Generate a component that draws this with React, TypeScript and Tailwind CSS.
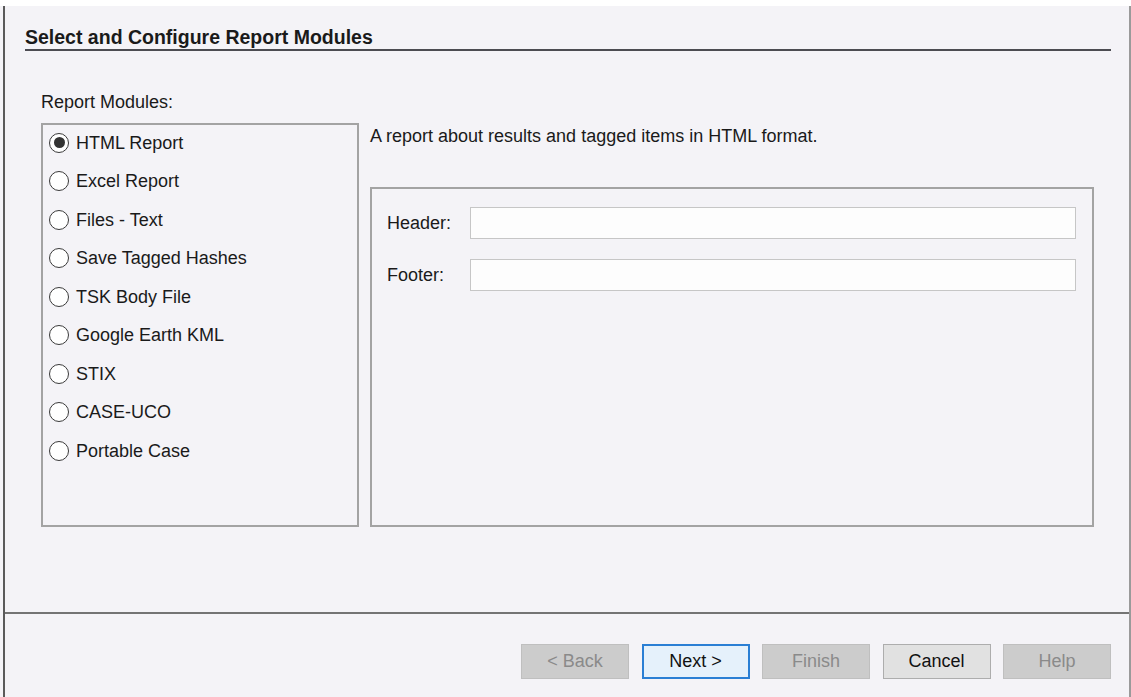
import React from "react";

const modules = [
  "HTML Report",
  "Excel Report",
  "Files - Text",
  "Save Tagged Hashes",
  "TSK Body File",
  "Google Earth KML",
  "STIX",
  "CASE-UCO",
  "Portable Case",
];

function Radio({ checked }: { checked: boolean }) {
  return (
    <span className="flex h-[20px] w-[20px] shrink-0 items-center justify-center rounded-full border-[1.5px] border-[#3a3a3a] bg-white">
      {checked && <span className="block h-[11px] w-[11px] rounded-full bg-[#333333]" />}
    </span>
  );
}

function Btn({ label, kind }: { label: string; kind: "disabled" | "default" | "normal" }) {
  const cls =
    kind === "disabled"
      ? "bg-[#cccccc] border border-[#bfbfbf] text-[#8a8a8a]"
      : kind === "default"
      ? "bg-[#e5f1fb] border-2 border-[#2a7fd4] text-[#111111]"
      : "bg-[#e1e1e1] border border-[#adadad] text-[#111111]";
  return (
    <div className={`flex h-[35px] w-[108px] items-center justify-center text-[18px] ${cls}`}>
      {label}
    </div>
  );
}

export default function App() {
  return (
    <div
      className="flex h-[697px] w-[1131px] flex-col overflow-hidden bg-[#f4f3f7] text-[#1a1a1a]"
      style={{ fontFamily: '"Liberation Sans", Arial, sans-serif' }}
    >
      <div className="h-[6px] shrink-0 bg-white" />
      <div className="ml-[3px] flex flex-1 flex-col border-l-2 border-r-2 border-l-[#5a5a5a] border-r-[#9a9a9a]">
        {/* upper content */}
        <div className="flex h-[606px] shrink-0 flex-col">
          <div className="ml-[20px] mr-[18px] mt-[19px]">
            <div className="h-[24px] text-[19.5px] font-bold leading-[24px] text-[#1a1a1a]">
              Select and Configure Report Modules
            </div>
            <div className="h-[2px] bg-[#4c4c52]" />
          </div>
          <div className="ml-[36px] mr-[35px] mt-[40px] flex flex-col">
            <div className="h-[22px] text-[18px] leading-[22px]">Report Modules:</div>
            <div className="mt-[10px] flex h-[404px] gap-[11px]">
              <div className="w-[318px] shrink-0 border-2 border-[#a3a3a3]">
                <div className="-mt-[1.5px] flex flex-col">
                  {modules.map((m, i) => (
                    <div key={m} className="flex h-[38.5px] items-center gap-[7px] pl-[6px]">
                      <Radio checked={i === 0} />
                      <span className="text-[18px] leading-[22px]">{m}</span>
                    </div>
                  ))}
                </div>
              </div>
              <div className="flex flex-1 flex-col">
                <div className="mt-[1.5px] h-[22px] text-[18px] leading-[22px]">
                  A report about results and tagged items in HTML format.
                </div>
                <div className="mt-[40.5px] flex-1 border-2 border-[#a3a3a3] pl-[15px] pr-[16px] pt-[18px]">
                  <div className="flex h-[32px] items-center">
                    <span className="w-[83px] shrink-0 text-[18px]">Header:</span>
                    <div className="h-[32px] flex-1 border border-[#c6c6c6] bg-[#fdfdfd]" />
                  </div>
                  <div className="mt-[20px] flex h-[32px] items-center">
                    <span className="w-[83px] shrink-0 text-[18px]">Footer:</span>
                    <div className="h-[32px] flex-1 border border-[#c6c6c6] bg-[#fdfdfd]" />
                  </div>
                </div>
              </div>
            </div>
          </div>
        </div>
        {/* button bar */}
        <div className="flex flex-1 justify-end gap-[12.5px] border-t-2 border-[#747474] pr-[18px] pt-[30px]">
          <Btn label="< Back" kind="disabled" />
          <Btn label="Next >" kind="default" />
          <Btn label="Finish" kind="disabled" />
          <Btn label="Cancel" kind="normal" />
          <Btn label="Help" kind="disabled" />
        </div>
      </div>
    </div>
  );
}
